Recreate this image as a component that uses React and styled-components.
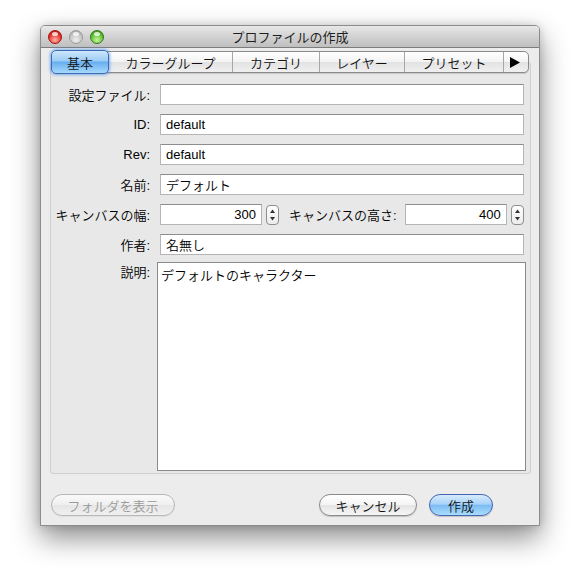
import React from 'react';
import styled, { createGlobalStyle } from 'styled-components';

const FONT = `"Liberation Sans", "Noto Sans CJK JP DemiLight", "Noto Sans CJK JP Light", "Noto Sans CJK JP", sans-serif`;

const GlobalStyle = createGlobalStyle`
  html, body {
    margin: 0;
    padding: 0;
    background: #ffffff;
  }
  body {
    font-family: ${FONT};
    font-size: 13px;
    color: #000;
  }
`;

const Page = styled.div`
  width: 580px;
  height: 580px;
  padding: 25px 0 0 40px;
  box-sizing: border-box;
`;

const Window = styled.div`
  width: 500px;
  height: 501px;
  box-sizing: border-box;
  border: 1px solid #8c8c8c;
  border-radius: 5px 5px 0 0;
  background: #ececec;
  box-shadow: 0 12px 28px rgba(0, 0, 0, 0.45), 0 0 8px rgba(0, 0, 0, 0.15);
  display: flex;
  flex-direction: column;
  overflow: hidden;
`;

const TitleBar = styled.div`
  height: 21px;
  flex: none;
  display: grid;
  grid-template-columns: 1fr auto 1fr;
  align-items: center;
  padding: 0 7px;
  background: linear-gradient(#e8e8e8, #d2d2d2 50%, #bfbfbf);
  border-bottom: 1px solid #7d7d7d;
`;

const Lights = styled.div`
  display: flex;
  gap: 7px;
  align-items: center;
`;

const lightColors = {
  red: ['#ffb0a8', '#e0342c', '#a0100c'],
  gray: ['#f0f0f0', '#c4c4c4', '#9a9a9a'],
  green: ['#c8f5a0', '#5cbf2e', '#2f7a14'],
};

const Light = styled.span`
  width: 14px;
  height: 14px;
  border-radius: 50%;
  box-sizing: border-box;
  border: 1px solid ${(p) => lightColors[p.$color][2]};
  background: radial-gradient(circle at 50% 75%, ${(p) => lightColors[p.$color][0]} 0%, ${(p) => lightColors[p.$color][1]} 60%, ${(p) => lightColors[p.$color][2]} 100%);
  position: relative;
  &::after {
    content: '';
    position: absolute;
    left: 3px;
    top: 1px;
    width: 6px;
    height: 4px;
    border-radius: 50%;
    background: rgba(255, 255, 255, 0.75);
  }
`;

const Title = styled.div`
  font-family: "Liberation Sans", "Noto Sans CJK JP", sans-serif;
  font-size: 13px;
  color: #1e1e1e;
`;

const Body = styled.div`
  flex: 1;
  display: flex;
  flex-direction: column;
  padding: 3px 8px 0 9px;
`;

const TabStrip = styled.div`
  position: relative;
  z-index: 1;
  display: flex;
  height: 22px;
  margin: 0 2px;
  box-sizing: border-box;
  border: 1px solid #8a8a8a;
  border-radius: 5px;
  background: linear-gradient(#ffffff, #f3f3f3 50%, #e2e2e2 51%, #f0f0f0);
  box-shadow: 0 1px 1px rgba(0, 0, 0, 0.15);
`;

const Tab = styled.div`
  width: ${(p) => p.$w}px;
  flex: none;
  display: flex;
  align-items: center;
  justify-content: center;
  box-sizing: border-box;
  border-left: ${(p) => (p.$first ? 'none' : '1px solid #a6a6a6')};
  color: #111;
  font-size: 13px;
  ${(p) =>
    p.$active &&
    `
    margin: -2px 0 -2px -2px;
    height: 24px;
    border: 1px solid #3d6cb5;
    border-radius: 5px;
    background: linear-gradient(#cde6fb, #9ccdf6 45%, #66aef0 50%, #a5d8fb);
    box-shadow: 0 0 3px 1px rgba(80, 150, 240, 0.7);
  `}
`;

const Panel = styled.div`
  margin-top: -11px;
  height: 412px;
  box-sizing: border-box;
  border: 1px solid #cfcfcf;
  border-radius: 3px;
  background: #e8e8e8;
  padding: 21px 8px 0 0;
`;

const Form = styled.div`
  display: grid;
  grid-template-columns: 99px 1fr;
  column-gap: 10px;
  row-gap: 9px;
  align-items: center;
`;

const Label = styled.label`
  text-align: right;
  white-space: nowrap;
  font-size: 13px;
  align-self: ${(p) => (p.$top ? 'start' : 'center')};
  margin-top: ${(p) => (p.$top ? '-2px' : '0')};
`;

const Field = styled.input`
  box-sizing: border-box;
  height: 21px;
  width: ${(p) => (p.$w ? `${p.$w}px` : '100%')};
  margin: 0;
  padding: 0 5px;
  border: 1px solid #b5b5b5;
  border-top-color: #8d8d8d;
  background: #fff;
  font-family: ${FONT};
  font-size: 13px;
  color: #000;
  text-align: ${(p) => (p.$right ? 'right' : 'left')};
  outline: none;
  flex: none;
`;

const SizeRow = styled.div`
  display: flex;
  align-items: center;
`;

const Spinner = styled.div`
  width: 13px;
  height: 20px;
  margin-left: 4px;
  box-sizing: border-box;
  border: 1px solid #8e8e8e;
  border-radius: 4px;
  background: linear-gradient(#ffffff, #ececec);
  display: flex;
  align-items: center;
  justify-content: center;
  flex: none;
`;

const InlineLabel = styled.span`
  margin: 0 8px 0 10px;
  white-space: nowrap;
`;

const Notes = styled.textarea`
  box-sizing: border-box;
  width: calc(100% + 5px);
  height: 209px;
  margin: -2px -2px 0 -3px;
  padding: 2px 3px;
  border: 1px solid #8a8a8a;
  background: #fff;
  font-family: ${FONT};
  font-size: 13px;
  color: #000;
  resize: none;
  outline: none;
`;

const Footer = styled.div`
  display: flex;
  align-items: center;
  padding: 20px 38px 0 1px;
`;

const Spacer = styled.div`
  flex: 1;
`;

const Button = styled.button`
  height: 22px;
  width: ${(p) => p.$w}px;
  margin-left: ${(p) => p.$gap || 0}px;
  box-sizing: border-box;
  border-radius: 11px;
  border: 1px solid ${(p) => (p.$disabled ? '#b8b8b8' : p.$primary ? '#4565b5' : '#8a8a8a')};
  background: ${(p) =>
    p.$primary
      ? 'linear-gradient(#d7ebfc, #a9d3f8 45%, #7dbdf3 52%, #a9dcfd)'
      : p.$disabled
      ? 'linear-gradient(#fafafa, #efefef 50%, #e6e6e6 51%, #f0f0f0)'
      : 'linear-gradient(#ffffff, #f4f4f4 50%, #e4e4e4 51%, #f6f6f6)'};
  box-shadow: 0 1px 1px rgba(0, 0, 0, ${(p) => (p.$disabled ? 0.05 : 0.18)});
  color: ${(p) => (p.$disabled ? '#9a9a9a' : '#111')};
  font-family: ${FONT};
  font-size: 13px;
  padding: 0;
  flex: none;
`;

const Arrows = () => (
  <svg width="7" height="14" viewBox="0 0 7 14">
    <path d="M3.5 1.5 L6 5 L1 5 Z" fill="#333" />
    <path d="M3.5 12.5 L6 9 L1 9 Z" fill="#333" />
  </svg>
);

const tabs = [
  { label: '基本', w: 58, active: true },
  { label: 'カラーグループ', w: 123 },
  { label: 'カテゴリ', w: 87 },
  { label: 'レイヤー', w: 85 },
  { label: 'プリセット', w: 99 },
];

export default function App() {
  return (
    <>
      <GlobalStyle />
      <Page>
        <Window>
          <TitleBar>
            <Lights>
              <Light $color="red" />
              <Light $color="gray" />
              <Light $color="green" />
            </Lights>
            <Title>プロファイルの作成</Title>
            <div />
          </TitleBar>
          <Body>
            <TabStrip>
              {tabs.map((t, i) => (
                <Tab key={t.label} $w={t.w} $first={i === 0 || i === 1} $active={t.active}>
                  {t.label}
                </Tab>
              ))}
              <Tab $w={23}>
                <svg width="10" height="11" viewBox="0 0 10 11">
                  <path d="M0 0 L10 5.5 L0 11 Z" fill="#000" />
                </svg>
              </Tab>
            </TabStrip>
            <Panel>
              <Form>
                <Label>設定ファイル:</Label>
                <Field readOnly defaultValue="" />
                <Label>ID:</Label>
                <Field readOnly defaultValue="default" />
                <Label>Rev:</Label>
                <Field readOnly defaultValue="default" />
                <Label>名前:</Label>
                <Field readOnly defaultValue="デフォルト" />
                <Label>キャンバスの幅:</Label>
                <SizeRow>
                  <Field $w={102} $right readOnly defaultValue="300" />
                  <Spinner>
                    <Arrows />
                  </Spinner>
                  <InlineLabel>キャンバスの高さ:</InlineLabel>
                  <Field $w={102} $right readOnly defaultValue="400" />
                  <Spinner>
                    <Arrows />
                  </Spinner>
                </SizeRow>
                <Label>作者:</Label>
                <Field readOnly defaultValue="名無し" />
                <Label $top>説明:</Label>
                <Notes readOnly defaultValue="デフォルトのキャラクター" />
              </Form>
            </Panel>
            <Footer>
              <Button $w={124} $disabled>フォルダを表示</Button>
              <Spacer />
              <Button $w={98}>キャンセル</Button>
              <Button $w={64} $gap={12} $primary>作成</Button>
            </Footer>
          </Body>
        </Window>
      </Page>
    </>
  );
}
